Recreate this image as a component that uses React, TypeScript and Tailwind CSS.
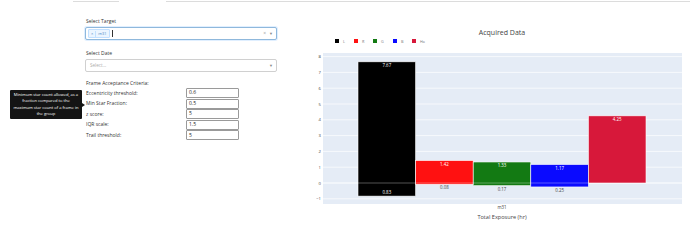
import React from "react";

const criteria = [
  { label: "Eccentricity threshold:", value: "0.6" },
  { label: "Min Star Fraction:", value: "0.5" },
  { label: "z score:", value: "5" },
  { label: "IQR scale:", value: "1.5" },
  { label: "Trail threshold:", value: "5" },
];

// bar chart data: [neg, pos]
const bars = [
  { name: "L", color: "#000000", low: 0.83, high: 7.67 },
  { name: "R", color: "#ff1111", low: 0.08, high: 1.42 },
  { name: "G", color: "#137a13", low: 0.17, high: 1.33 },
  { name: "B", color: "#0a0aff", low: 0.25, high: 1.17 },
  { name: "Ha", color: "#d7183a", low: 0, high: 4.25 },
];

const ZERO = 163;
const UNIT = 15.8;
const yOf = (v: number) => ZERO - v * UNIT;

function Chart() {
  const legendX = [35, 54, 73, 93, 112];
  return (
    <svg width={390} height={208} viewBox="0 0 390 208" className="block" style={{ fontFamily: '"Open Sans", "Noto Sans", sans-serif' }}>
      <text x={202} y={15} textAnchor="middle" fontSize={7} fill="#444">
        Acquired Data
      </text>

      {/* legend */}
      {bars.map((b, i) => (
        <g key={b.name}>
          <rect x={legendX[i]} y={19} width={4} height={4} fill={b.color} />
          <text x={legendX[i] + 8} y={22.6} fontSize={3.8} fill="#777">
            {b.name}
          </text>
        </g>
      ))}

      {/* plot background */}
      <rect x={23} y={33} width={359} height={151} fill="#e5ecf6" />
      {[-1, 1, 2, 3, 4, 5, 6, 7, 8].map((v) => (
        <line key={v} x1={23} x2={382} y1={yOf(v)} y2={yOf(v)} stroke="#fff" strokeWidth={0.7} />
      ))}
      <line x1={23} x2={382} y1={ZERO} y2={ZERO} stroke="#fff" strokeWidth={1.2} />
      {[-1, 0, 1, 2, 3, 4, 5, 6, 7, 8].map((v) => (
        <text key={v} x={21} y={yOf(v) + 1.5} textAnchor="end" fontSize={4.2} fill="#444">
          {v < 0 ? "−1" : v}
        </text>
      ))}

      {/* bars */}
      {bars.map((b, i) => {
        const x = 58 + i * 57.6;
        const top = yOf(b.high);
        const bottom = yOf(-b.low);
        return (
          <g key={b.name}>
            <rect x={x} y={top} width={57.6} height={bottom - top} fill={b.color} stroke="#fff" strokeWidth={0.6} />
            <text x={x + 28.8} y={top + 5} textAnchor="middle" fontSize={4.4} fill="#fff">
              {b.high.toFixed(2)}
            </text>
            {b.low > 0 &&
              (i === 0 ? (
                <text x={x + 28.8} y={bottom - 2} textAnchor="middle" fontSize={4.4} fill="#fff">
                  {b.low.toFixed(2)}
                </text>
              ) : (
                <text x={x + 28.8} y={bottom + 5} textAnchor="middle" fontSize={4.4} fill="#444">
                  {b.low.toFixed(2)}
                </text>
              ))}
          </g>
        );
      })}
      <line x1={58} x2={288.4} y1={ZERO} y2={ZERO} stroke="#fff" strokeOpacity={0.55} strokeWidth={0.6} />

      <text x={202} y={189} textAnchor="middle" fontSize={4.4} fill="#444">
        m31
      </text>
      <text x={202} y={199} textAnchor="middle" fontSize={5.6} fill="#444">
        Total Exposure (hr)
      </text>
    </svg>
  );
}

export default function App() {
  return (
    <div
      className="relative w-[690px] h-[228px] overflow-hidden bg-white text-[#333]"
      style={{ fontFamily: '"Open Sans", "Noto Sans", sans-serif' }}
    >
      {/* tab strip remnant */}
      <div className="flex h-[2px]">
        <div className="ml-[73px] w-[46px] border-b border-[#dcdcdc]" />
        <div className="ml-[47px] flex-1 border-b border-[#dcdcdc]" />
      </div>

      <div className="flex">
        {/* left controls */}
        <div className="ml-[85px] w-[192px] pt-[16px]">
          <div className="pl-[1px] text-[5px] leading-[7px]">Select Target</div>
          <div className="mt-[2px] flex h-[13px] items-center rounded-[2px] border border-[#8fb8dc] bg-white pl-[2px] pr-[3px] shadow-[0_0_0_1px_rgba(0,126,255,0.12)]">
            <div className="flex h-[9px] items-center rounded-[1px] border border-[#c2e0ff] bg-[#ebf5ff] text-[4px] text-[#4a88c4]">
              <span className="px-[2px] border-r border-[#c2e0ff]">×</span>
              <span className="px-[2px]">m31</span>
            </div>
            <div className="ml-[2px] h-[7px] w-[0.8px] bg-[#333]" />
            <div className="flex-1" />
            <span className="text-[5px] text-[#999]">×</span>
            <span className="ml-[3px] text-[4px] text-[#888]">▼</span>
          </div>

          <div className="mt-[10px] pl-[1px] text-[5px] leading-[7px]">Select Date</div>
          <div className="mt-[2px] flex h-[13px] items-center rounded-[2px] border border-[#d0d0d0] bg-white pl-[4px] pr-[3px]">
            <span className="text-[4.6px] text-[#aaa]">Select...</span>
            <div className="flex-1" />
            <span className="text-[4px] text-[#888]">▼</span>
          </div>

          <div className="mt-[8px] pl-[1px] text-[5px] leading-[7px]">Frame Acceptance Criteria:</div>
          <div className="mt-[1px] flex flex-col gap-[0.6px]">
            {criteria.map((c) => (
              <div key={c.label} className="flex h-[10px] items-center">
                <span className="w-[101px] pl-[1px] text-[5px] leading-[7px]">{c.label}</span>
                <div className="flex h-[10px] w-[53px] items-center rounded-[1px] border border-[#9a9a9a] bg-white pl-[2px] text-[5px] text-[#222]">
                  {c.value}
                </div>
              </div>
            ))}
          </div>
        </div>

        {/* chart */}
        <div className="ml-[23px] w-[390px] pt-[18px]">
          <Chart />
        </div>
      </div>

      {/* tooltip over Min Star Fraction */}
      <div className="absolute left-[10px] top-[90px] flex h-[29px] w-[72px] flex-col items-center justify-center rounded-[1px] bg-[#141414] text-center text-[4.1px] leading-[6.4px] text-white">
        <span>Minimum star count allowed, as a</span>
        <span>fraction compared to the</span>
        <span>maximum star count of a frame in</span>
        <span>the group</span>
      </div>
      <div className="absolute left-[82px] top-[103px] h-0 w-0 border-y-[2px] border-l-[3px] border-y-transparent border-l-[#141414]" />
    </div>
  );
}
